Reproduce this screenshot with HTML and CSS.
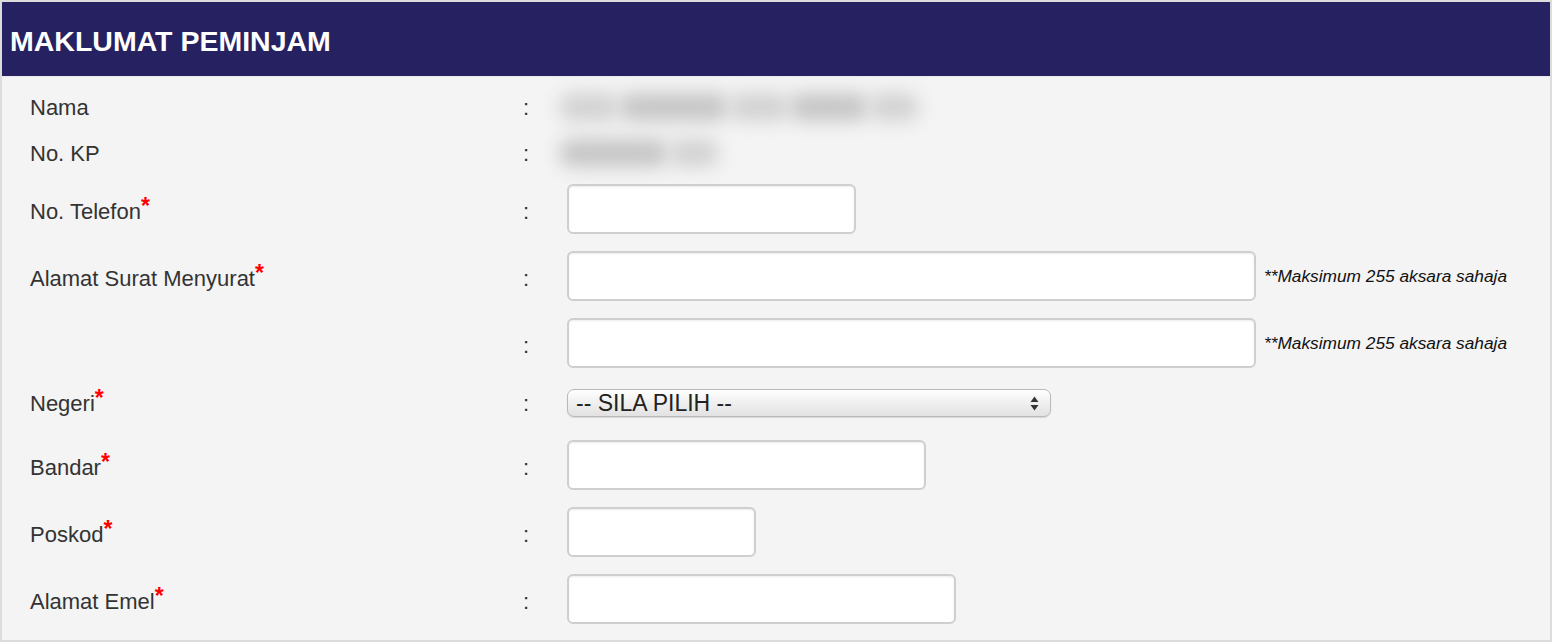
FILE: index.html
```html
<!DOCTYPE html>
<html lang="ms">

<head>
  <meta charset="UTF-8" />
  <title>Maklumat Peminjam</title>
  <link rel="stylesheet" href="styles.css">
</head>

<body>
  <div class="panel">
    <div class="panel-head">MAKLUMAT PEMINJAM</div>
    <div class="panel-body">
      <div class="row text-row">
        <div class="label">Nama</div>
        <div class="colon">:</div>
        <div class="value blurred">
          <span class="blur" style="width: 60px"></span>
          <span class="blur dark" style="width: 110px"></span>
          <span class="blur" style="width: 60px"></span>
          <span class="blur dark" style="width: 80px"></span>
          <span class="blur" style="width: 50px"></span>
        </div>
      </div>
      <div class="row text-row">
        <div class="label">No. KP</div>
        <div class="colon">:</div>
        <div class="value blurred">
          <span class="blur dark" style="width: 110px"></span>
          <span class="blur" style="width: 50px"></span>
        </div>
      </div>
      <div class="row">
        <div class="label">No. Telefon<span class="req">*</span></div>
        <div class="colon">:</div>
        <div class="value"><input type="text" class="field w-tel"></div>
      </div>
      <div class="row">
        <div class="label">Alamat Surat Menyurat<span class="req">*</span></div>
        <div class="colon">:</div>
        <div class="value"><input type="text" class="field w-addr"><span class="note">**Maksimum 255 aksara sahaja</span></div>
      </div>
      <div class="row">
        <div class="label"></div>
        <div class="colon">:</div>
        <div class="value"><input type="text" class="field w-addr"><span class="note">**Maksimum 255 aksara sahaja</span></div>
      </div>
      <div class="row select-row">
        <div class="label">Negeri<span class="req">*</span></div>
        <div class="colon">:</div>
        <div class="value">
          <div class="select">
            <span>-- SILA PILIH --</span>
            <svg width="9" height="15" viewBox="0 0 9 15">
              <path d="M4.5 0.5 L8.5 6 L0.5 6 Z" fill="#333" />
              <path d="M4.5 14.5 L8.5 9 L0.5 9 Z" fill="#333" />
            </svg>
          </div>
        </div>
      </div>
      <div class="row">
        <div class="label">Bandar<span class="req">*</span></div>
        <div class="colon">:</div>
        <div class="value"><input type="text" class="field w-city"></div>
      </div>
      <div class="row">
        <div class="label">Poskod<span class="req">*</span></div>
        <div class="colon">:</div>
        <div class="value"><input type="text" class="field w-post"></div>
      </div>
      <div class="row">
        <div class="label">Alamat Emel<span class="req">*</span></div>
        <div class="colon">:</div>
        <div class="value"><input type="text" class="field w-mail"></div>
      </div>
    </div>
  </div>
</body>

</html>
```

FILE: styles.css
```css
html,
body {
  margin: 0;
  padding: 0;
}

body {
  font-family: "Liberation Sans", Arial, Helvetica, sans-serif;
  color: #333;
  background: #fff;
}

.panel {
  width: 1552px;
  height: 642px;
  box-sizing: border-box;
  border: 2px solid #dcdcdc;
  background: #f4f4f4;
}

.panel-head {
  height: 75px;
  box-sizing: border-box;
  padding-top: 4px;
  background: #262262;
  color: #fff;
  font-weight: bold;
  font-size: 28.5px;
  padding-left: 8px;
  display: flex;
  align-items: center;
  border-bottom: 1px solid #e8e8ee;
}

.panel-body {
  padding: 15px 0 15px 28px;
  display: flex;
  flex-direction: column;
  gap: 17px;
}

.row {
  display: grid;
  grid-template-columns: 493px 44px 1fr;
  align-items: center;
  height: 50px;
  font-size: 22px;
}

.text-row {
  height: 29px;
}

.select-row {
  height: 28px;
  margin-top: 4px;
  margin-bottom: 6px;
}

.label,
.colon {
  color: #333;
  padding-top: 5px;
}

.text-row .label,
.text-row .colon {
  padding-top: 2px;
}

.select-row .label,
.select-row .colon {
  padding-top: 2px;
}

.req {
  color: #f00;
  font-size: 23px;
  font-weight: bold;
  vertical-align: 5px;
  line-height: 0;
}

.value {
  display: flex;
  align-items: center;
}

.field {
  box-sizing: border-box;
  height: 50px;
  border: 2px solid #cfcfcf;
  border-radius: 6px;
  background: #fff;
  box-shadow: inset 0 1px 2px rgba(0, 0, 0, 0.08);
  margin: 0;
  padding: 0 8px;
  font-size: 20px;
}

.w-tel {
  width: 289px;
}

.w-addr {
  width: 689px;
}

.w-city {
  width: 359px;
}

.w-post {
  width: 189px;
}

.w-mail {
  width: 389px;
}

.note {
  margin-left: 8px;
  font-style: italic;
  font-size: 17.3px;
  color: #111;
}

.select {
  box-sizing: border-box;
  width: 484px;
  height: 28px;
  border: 1px solid #b9b9b9;
  border-radius: 7px;
  background: linear-gradient(#ffffff, #f1f1f1 45%, #e2e2e2);
  box-shadow: 0 1px 1px rgba(0, 0, 0, 0.12);
  display: flex;
  align-items: center;
  justify-content: space-between;
  padding: 0 11px 0 8px;
  font-size: 23px;
  color: #222;
}

.blurred {
  margin-left: -8px;
}

.blur {
  display: block;
  height: 28px;
  background: #d2d2d2;
  border-radius: 14px;
  filter: blur(9px);
}

.blur.dark {
  background: #c6c6c6;
}
```
